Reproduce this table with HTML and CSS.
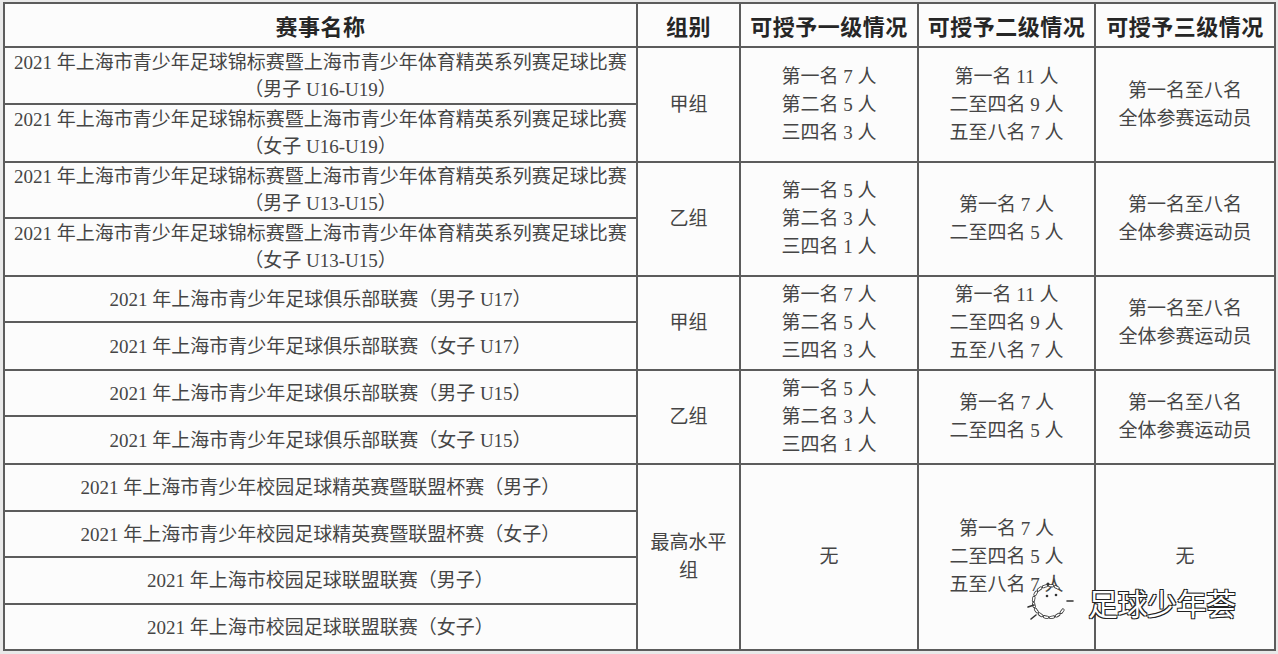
FILE: index.html
```html
<!DOCTYPE html>
<html lang="zh-CN">
<head>
<meta charset="utf-8">
<title>赛事等级</title>
<link rel="stylesheet" href="styles.css">
</head>
<body>
<div class="page">
<table class="grid">
  <colgroup>
    <col class="c-name"><col class="c-group"><col class="c-lv1"><col class="c-lv2"><col class="c-lv3">
  </colgroup>
  <thead>
    <tr class="r-head">
      <th>赛事名称</th><th>组别</th><th>可授予一级情况</th><th>可授予二级情况</th><th>可授予三级情况</th>
    </tr>
  </thead>
  <tbody>
    <tr class="r-57">
      <td class="name">2021 年上海市青少年足球锦标赛暨上海市青少年体育精英系列赛足球比赛<br>（男子 U16-U19）</td>
      <td rowspan="2">甲组</td>
      <td rowspan="2">第一名 7 人<br>第二名 5 人<br>三四名 3 人</td>
      <td rowspan="2">第一名 11 人<br>二至四名 9 人<br>五至八名 7 人</td>
      <td rowspan="2">第一名至八名<br>全体参赛运动员</td>
    </tr>
    <tr class="r-58">
      <td class="name">2021 年上海市青少年足球锦标赛暨上海市青少年体育精英系列赛足球比赛<br>（女子 U16-U19）</td>
    </tr>
    <tr class="r-56">
      <td class="name">2021 年上海市青少年足球锦标赛暨上海市青少年体育精英系列赛足球比赛<br>（男子 U13-U15）</td>
      <td rowspan="2">乙组</td>
      <td rowspan="2">第一名 5 人<br>第二名 3 人<br>三四名 1 人</td>
      <td rowspan="2">第一名 7 人<br>二至四名 5 人</td>
      <td rowspan="2">第一名至八名<br>全体参赛运动员</td>
    </tr>
    <tr class="r-58">
      <td class="name">2021 年上海市青少年足球锦标赛暨上海市青少年体育精英系列赛足球比赛<br>（女子 U13-U15）</td>
    </tr>
    <tr class="r-46">
      <td class="name">2021 年上海市青少年足球俱乐部联赛（男子 U17）</td>
      <td rowspan="2">甲组</td>
      <td rowspan="2">第一名 7 人<br>第二名 5 人<br>三四名 3 人</td>
      <td rowspan="2">第一名 11 人<br>二至四名 9 人<br>五至八名 7 人</td>
      <td rowspan="2">第一名至八名<br>全体参赛运动员</td>
    </tr>
    <tr class="r-48">
      <td class="name">2021 年上海市青少年足球俱乐部联赛（女子 U17）</td>
    </tr>
    <tr class="r-46">
      <td class="name">2021 年上海市青少年足球俱乐部联赛（男子 U15）</td>
      <td rowspan="2">乙组</td>
      <td rowspan="2">第一名 5 人<br>第二名 3 人<br>三四名 1 人</td>
      <td rowspan="2">第一名 7 人<br>二至四名 5 人</td>
      <td rowspan="2">第一名至八名<br>全体参赛运动员</td>
    </tr>
    <tr class="r-48">
      <td class="name">2021 年上海市青少年足球俱乐部联赛（女子 U15）</td>
    </tr>
    <tr class="r-47">
      <td class="name">2021 年上海市青少年校园足球精英赛暨联盟杯赛（男子）</td>
      <td rowspan="4" class="grp">最高水平组</td>
      <td rowspan="4">无</td>
      <td rowspan="4">第一名 7 人<br>二至四名 5 人<br>五至八名 7 人</td>
      <td rowspan="4">无</td>
    </tr>
    <tr class="r-46">
      <td class="name">2021 年上海市青少年校园足球精英赛暨联盟杯赛（女子）</td>
    </tr>
    <tr class="r-47">
      <td class="name">2021 年上海市校园足球联盟联赛（男子）</td>
    </tr>
    <tr class="r-46">
      <td class="name">2021 年上海市校园足球联盟联赛（女子）</td>
    </tr>
  </tbody>
</table>
<div class="watermark">
  <svg class="wm-logo" width="54" height="44" viewBox="0 0 54 44" aria-hidden="true">
    <g fill="none" stroke-linecap="round">
      <path d="M32 8 A16 16 0 1 0 37 30" stroke="#333" stroke-width="3.2" stroke-dasharray="3 3"/>
      <path d="M32 8 A16 16 0 1 0 37 30" stroke="#fff" stroke-width="1.6" stroke-dasharray="3 3"/>
      <path d="M8 25 L2 27 M10 35 L5 39 M41 21 L47 21" stroke="#333" stroke-width="1.6"/>
    </g>
    <circle cx="22" cy="4" r="1.6" fill="#333"/>
    <circle cx="30" cy="15" r="1.3" fill="#333"/>
    <circle cx="21" cy="16" r="1.3" fill="#333"/>
  </svg>
  <span class="wm-text">足球少年荟</span>
</div>
</div>
</body>
</html>
```

FILE: styles.css
```css
html, body {
  margin: 0;
  padding: 0;
  background: #e9e9e9;
}

.page {
  position: relative;
  width: 1278px;
  height: 654px;
  padding: 2px 0 0 3px;
  box-sizing: border-box;
}

.grid {
  width: 1271px;
  table-layout: fixed;
  border-collapse: collapse;
  background: #fcfcfc;
  font-family: "Liberation Serif", "Noto Sans CJK SC", serif;
  font-size: 19px;
  line-height: 28px;
  color: #454545;
}

.c-name { width: 633px; }
.c-group { width: 103px; }
.c-lv1 { width: 178px; }
.c-lv2 { width: 177px; }
.c-lv3 { width: 180px; }

.grid th,
.grid td {
  border: 2px solid #5c5c5c;
  text-align: center;
  vertical-align: middle;
  padding: 0 8px;
}

.grid th {
  font-family: "Noto Sans CJK SC", sans-serif;
  font-weight: 700;
  font-size: 22px;
  line-height: 30px;
  color: #262626;
  letter-spacing: 0.5px;
}

.grid td.name {
  padding: 0 4px;
  line-height: 27px;
}

.grid td.grp {
  padding: 0 10px;
}

.r-head { height: 44px; }
.r-46 { height: 46px; }
.r-47 { height: 47px; }
.r-48 { height: 48px; }
.r-56 { height: 56px; }
.r-57 { height: 57px; }
.r-58 { height: 58px; }

.watermark {
  position: absolute;
  left: 1026px;
  top: 580px;
  display: flex;
  align-items: center;
  gap: 8px;
}

.wm-logo {
  display: block;
}

.wm-text {
  font-family: "Noto Sans CJK SC", sans-serif;
  font-size: 30px;
  line-height: 36px;
  color: #ffffff;
  letter-spacing: -0.5px;
  text-shadow: 1px 1px 0 #222, -1px -1px 0 #222, 1px -1px 0 #222, -1px 1px 0 #222;
}
```
